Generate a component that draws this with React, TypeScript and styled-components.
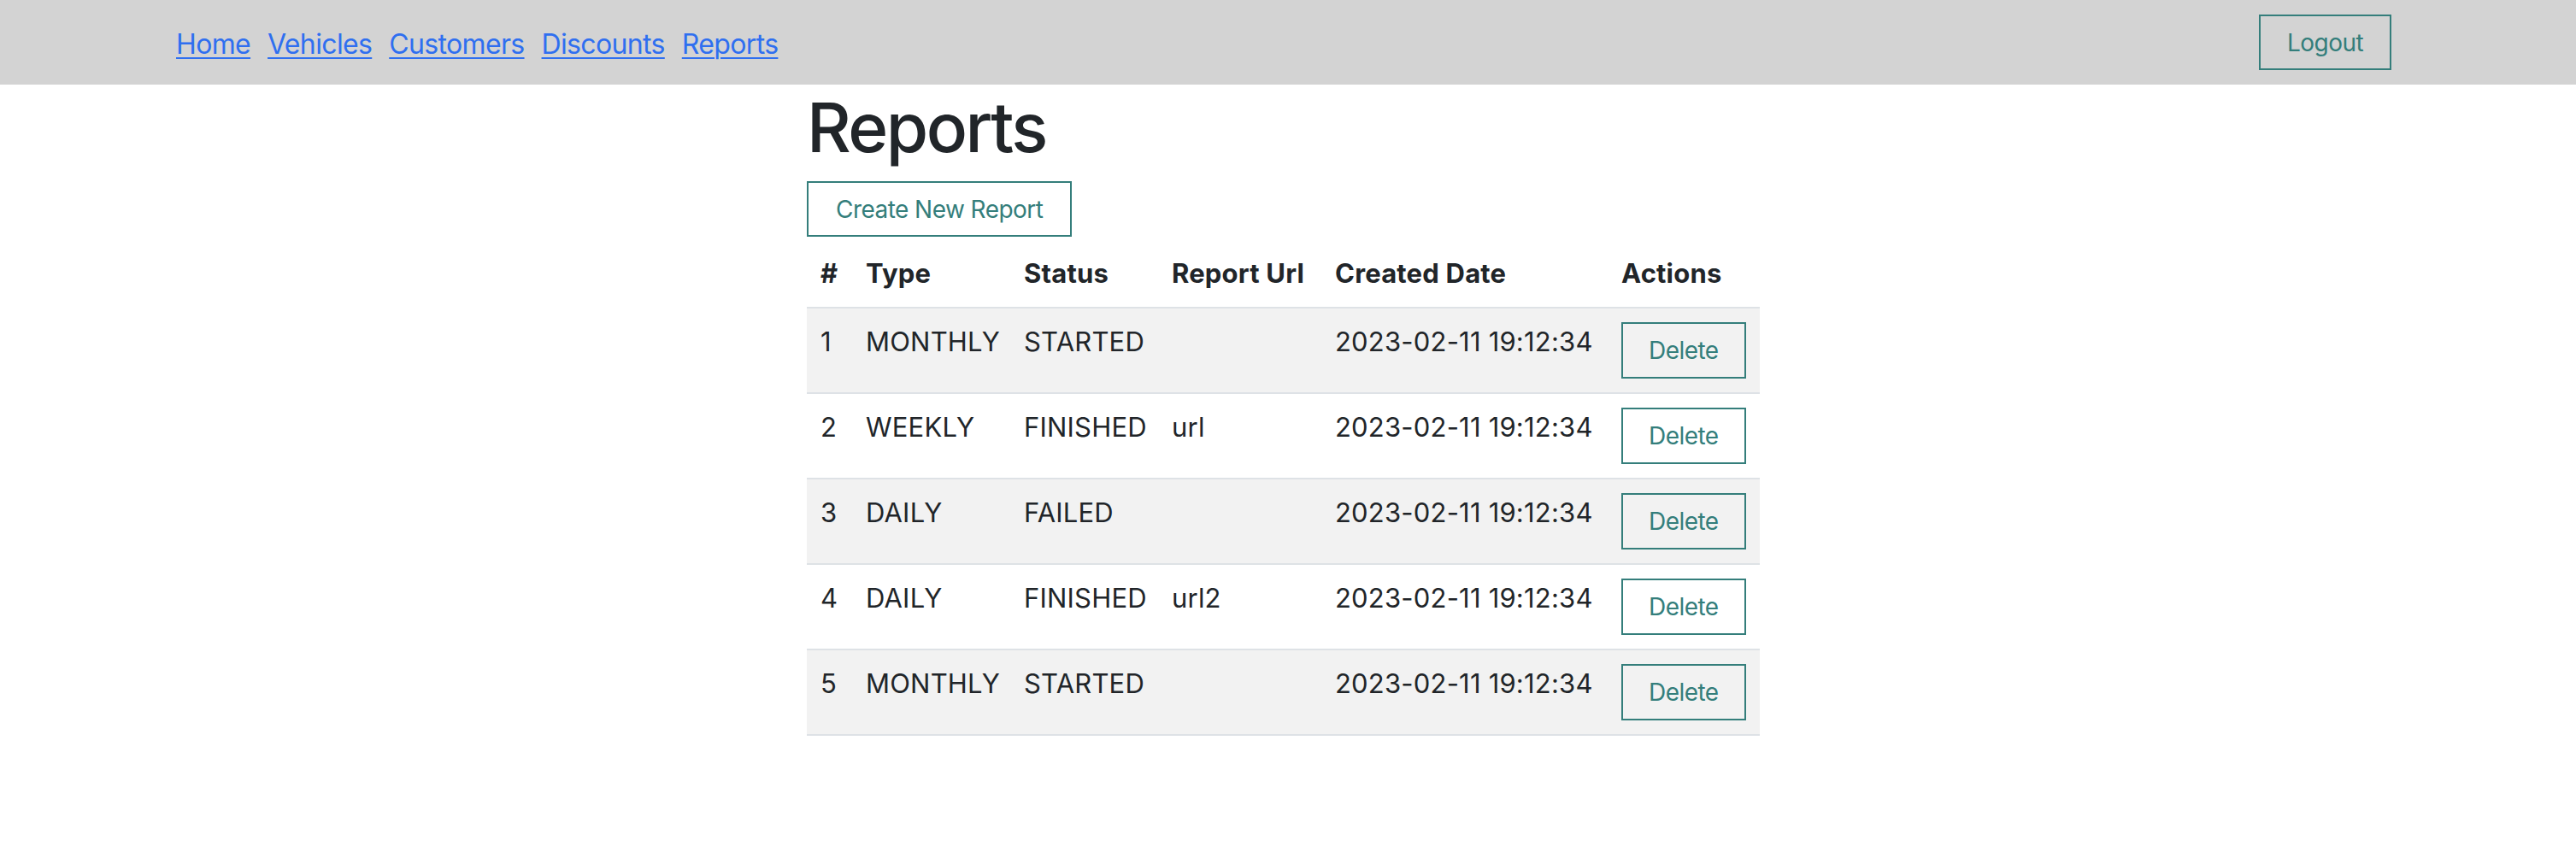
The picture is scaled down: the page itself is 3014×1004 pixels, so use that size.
import React from 'react';
import styled, { createGlobalStyle } from 'styled-components';

interface IReport {
    id: number;
    type: string;
    status: string;
    url: string;
    createdDate: string;
}

const GlobalStyle = createGlobalStyle`
    body {
        margin: 0;
        background: #ffffff;
        color: #212529;
        font-family: Inter, "Noto Sans", "Liberation Sans", sans-serif;
    }
`;

const Navbar = styled.nav`
    height: 99px;
    box-sizing: border-box;
    padding: 0 216px 0 206px;
    display: flex;
    align-items: center;
    justify-content: space-between;
    background: #d3d3d3;
`;

const NavLinks = styled.div`
    display: flex;
    gap: 20px;
    padding-top: 3px;
`;

const NavLink = styled.a`
    font-size: 32px;
    letter-spacing: -0.65px;
    color: #2f6ff0;
    text-decoration: underline;
    text-underline-offset: 4px;
    text-decoration-thickness: 2px;
    cursor: pointer;
`;

const OutlineButton = styled.button<{ $pad?: number }>`
    box-sizing: border-box;
    height: 65px;
    padding: 0 ${p => p.$pad ?? 31}px;
    border: 2px solid #347e7b;
    border-radius: 0;
    background: transparent;
    color: #347e7b;
    font-family: inherit;
    font-size: 28px;
    letter-spacing: -0.55px;
    line-height: 44px;
    cursor: pointer;
`;

const DeleteButton = styled(OutlineButton)`
    height: 66px;
    padding: 0 30px;
`;

const Main = styled.main`
    width: 1115px;
    margin: 0 auto;
    padding-right: 11px;
`;

const Title = styled.h1`
    margin: 2px 0 15px;
    font-size: 80px;
    font-weight: 500;
    line-height: 96px;
    letter-spacing: -2.5px;
`;

const Table = styled.table`
    margin-top: 4px;
    width: 1115px;
    border-collapse: collapse;
    table-layout: fixed;
    font-size: 31px;
    letter-spacing: 0.2px;
    line-height: 46px;
`;

const HeadCell = styled.th<{ $width: number }>`
    box-sizing: border-box;
    width: ${p => p.$width}px;
    padding: 16px;
    text-align: left;
    font-weight: 700;
    white-space: nowrap;
    border-bottom: 2px solid #dee2e6;
`;

const Row = styled.tr<{ $striped: boolean }>`
    background: ${p => (p.$striped ? '#f2f2f2' : '#ffffff')};
    border-bottom: 2px solid #dee2e6;
`;

const Cell = styled.td`
    padding: 16px;
    vertical-align: top;
    white-space: nowrap;
`;

const reports: IReport[] = [
    { id: 1, type: 'MONTHLY', status: 'STARTED', url: '', createdDate: '2023-02-11 19:12:34' },
    { id: 2, type: 'WEEKLY', status: 'FINISHED', url: 'url', createdDate: '2023-02-11 19:12:34' },
    { id: 3, type: 'DAILY', status: 'FAILED', url: '', createdDate: '2023-02-11 19:12:34' },
    { id: 4, type: 'DAILY', status: 'FINISHED', url: 'url2', createdDate: '2023-02-11 19:12:34' },
    { id: 5, type: 'MONTHLY', status: 'STARTED', url: '', createdDate: '2023-02-11 19:12:34' },
];

const columns = [
    { label: '#', width: 53 },
    { label: 'Type', width: 185 },
    { label: 'Status', width: 173 },
    { label: 'Report Url', width: 191 },
    { label: 'Created Date', width: 335 },
    { label: 'Actions', width: 178 },
];

const App = () => {
    return (
        <>
            <GlobalStyle />
            <Navbar>
                <NavLinks>
                    <NavLink>Home</NavLink>
                    <NavLink>Vehicles</NavLink>
                    <NavLink>Customers</NavLink>
                    <NavLink>Discounts</NavLink>
                    <NavLink>Reports</NavLink>
                </NavLinks>
                <OutlineButton>Logout</OutlineButton>
            </Navbar>
            <Main>
                <Title>Reports</Title>
                <OutlineButton $pad={32}>Create New Report</OutlineButton>
                <Table>
                    <thead>
                        <tr>
                            {columns.map(c => (
                                <HeadCell key={c.label} $width={c.width}>{c.label}</HeadCell>
                            ))}
                        </tr>
                    </thead>
                    <tbody>
                        {reports.map((r, i) => (
                            <Row key={r.id} $striped={i % 2 === 0}>
                                <Cell>{r.id}</Cell>
                                <Cell>{r.type}</Cell>
                                <Cell>{r.status}</Cell>
                                <Cell>{r.url}</Cell>
                                <Cell>{r.createdDate}</Cell>
                                <Cell>
                                    <DeleteButton>Delete</DeleteButton>
                                </Cell>
                            </Row>
                        ))}
                    </tbody>
                </Table>
            </Main>
        </>
    );
};

export default App;
